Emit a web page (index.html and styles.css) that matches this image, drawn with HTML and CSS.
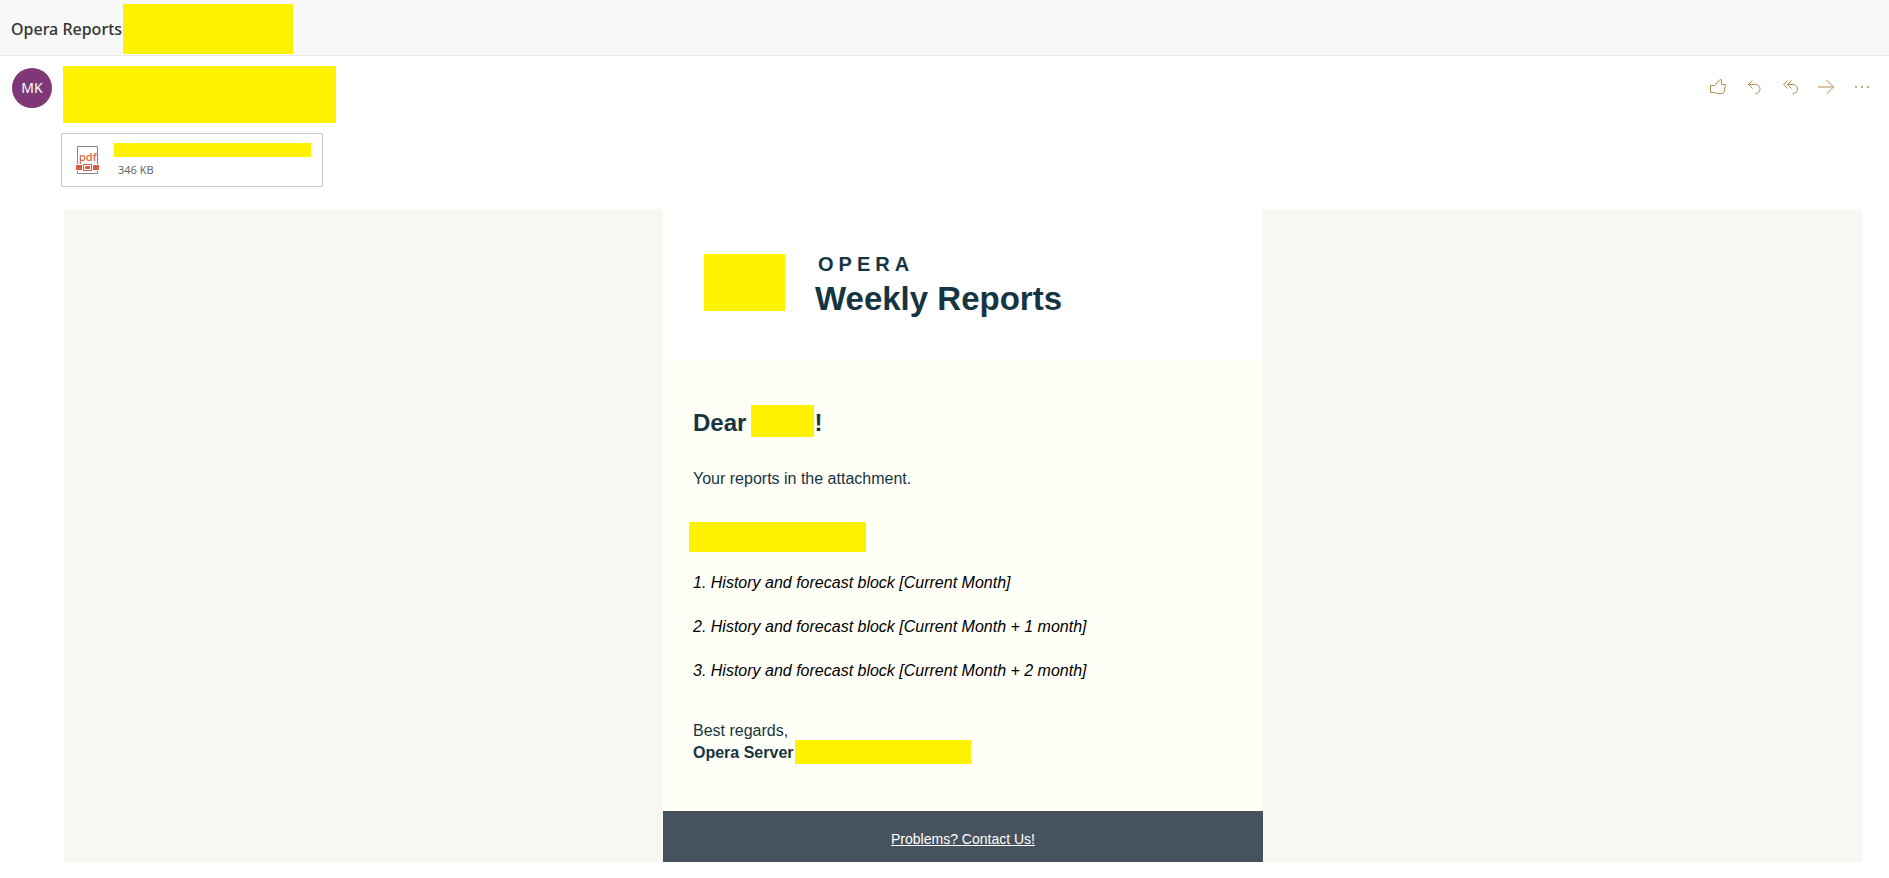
FILE: index.html
```html
<!DOCTYPE html>
<html lang="en">
<head>
  <meta charset="UTF-8" />
  <meta name="viewport" content="width=device-width, initial-scale=1" />
  <title>Opera Reports</title>
  <link rel="stylesheet" href="styles.css">
</head>
<body>
  <header class="subject-bar">
    <h1>Opera Reports</h1>
    <span class="mask mask-subject"></span>
  </header>

  <section class="sender">
    <div class="avatar">MK</div>
    <span class="mask mask-sender"></span>
    <div class="actions">
      <button type="button" aria-label="Like">
        <svg width="20" height="20" viewBox="0 0 20 20"><path d="M2.5 8.5H6.500L12 2.500L13.500 3V7.500H17.500L16 15.500L14.500 16.500H8.500L7 15.500H2.500Z"/></svg>
      </button>
      <button type="button" aria-label="Reply">
        <svg width="20" height="20" viewBox="0 0 20 20"><path d="M8.500 3.500L4.500 7.500L8.500 11.500M4.500 7.500H11.500A4.500 4.500 0 0 1 11.500 16.500H11"/></svg>
      </button>
      <button type="button" aria-label="Reply all">
        <svg width="20" height="20" viewBox="0 0 20 20"><path d="M7.500 3.500L3.500 7.500L7.500 11.500M11.500 3.500L7.500 7.500L11.500 11.500M7.500 7.500H13A4.500 4.500 0 0 1 13 16.500H12.500"/></svg>
      </button>
      <button type="button" aria-label="Forward">
        <svg width="20" height="20" viewBox="0 0 20 20"><path d="M2 10H17.500M10.500 3L17.500 10L10.500 17"/></svg>
      </button>
      <button type="button" aria-label="More actions">
        <svg class="dots" width="20" height="20" viewBox="0 0 20 20"><path d="M3 9h2v2h-2zM9 9h2v2h-2zM15 9h2v2h-2z"/></svg>
      </button>
    </div>
  </section>

  <a class="attachment" href="#">
    <svg width="24" height="28" viewBox="0 0 24 28">
      <path class="page" d="M1.500 18V0.500H21.500V18M1.500 25V27.500H21.500V25"/>
      <text x="3" y="15">pdf</text>
      <path class="band" d="M0 19H6V24H0ZM17 19H23V24H17Z"/>
      <rect class="buckle" x="7.500" y="18.500" width="8" height="6"/>
      <rect class="band" x="9" y="20" width="5" height="3"/>
    </svg>
    <span class="file">
      <span class="mask mask-file"></span>
      <span class="size">346 KB</span>
    </span>
  </a>

  <main class="message">
    <div class="letter">
      <div class="letter-head">
        <span class="mask mask-logo"></span>
        <div class="brand">
          <p>OPERA</p>
          <h2>Weekly Reports</h2>
        </div>
      </div>
      <div class="letter-body">
        <h3>Dear <span class="mask mask-name"></span>!</h3>
        <p>Your reports in the attachment.</p>
        <span class="mask mask-hotel"></span>
        <ol>
          <li>1. History and forecast block [Current Month]</li>
          <li>2. History and forecast block [Current Month + 1 month]</li>
          <li>3. History and forecast block [Current Month + 2 month]</li>
        </ol>
        <p class="regards">Best regards,</p>
        <div class="signature"><b>Opera Server</b><span class="mask mask-server"></span></div>
      </div>
      <footer><a href="#">Problems? Contact Us!</a></footer>
    </div>
  </main>
</body>
</html>
```
FILE: styles.css
```css
* {
  box-sizing: border-box;
}

body {
  margin: 0;
  background-color: #fff;
  color: #163542;
  font-family: "Noto Sans", sans-serif;
}

h1, h2, h3, p, ol {
  margin: 0;
  padding: 0;
}

.mask {
  display: block;
  background-color: #fff200;
}

.subject-bar {
  display: flex;
  align-items: center;
  height: 56px;
  padding: 2px 11px 0;
  background-color: #f8f8f8;
  border-bottom: 1px solid #eaeaea;
}

.subject-bar h1 {
  color: #333;
  font-size: 16px;
  font-weight: 500;
}

.mask-subject {
  width: 170px;
  height: 50px;
  margin-left: 1px;
}

.sender {
  display: flex;
  align-items: flex-start;
  padding: 10px 9px 10px 12px;
}

.avatar {
  width: 40px;
  height: 40px;
  margin: 2px 11px 0 0;
  border-radius: 50%;
  background-color: #7e3877;
  color: #fff;
  font-size: 14px;
  line-height: 40px;
  text-align: center;
}

.mask-sender {
  width: 273px;
  height: 57px;
}

.actions {
  display: flex;
  margin-left: auto;
}

.actions button {
  width: 36px;
  height: 42px;
  padding: 0;
  border: none;
  background: none;
  cursor: pointer;
}

.actions svg {
  display: block;
  margin: 0 auto;
  fill: none;
  stroke: #b98a58;
}

.actions .dots {
  fill: #c9ac8c;
  stroke: none;
}

.attachment {
  display: flex;
  width: 262px;
  height: 54px;
  margin-left: 61px;
  padding: 9px 11px 0 14px;
  border: 1px solid #c8c8c8;
  border-radius: 2px;
  text-decoration: none;
}

.attachment svg {
  flex: none;
  margin-top: 3px;
  fill: none;
}

.attachment text {
  fill: #dc6141;
  font-size: 11px;
  font-weight: 500;
}

.page {
  stroke: #858585;
}

.band {
  fill: #d65f3e;
}

.buckle {
  stroke: #d65f3e;
}

.file {
  flex: 1;
  margin-left: 14px;
}

.mask-file {
  height: 14px;
}

.size {
  display: block;
  margin: 5px 0 0 4px;
  color: #666;
  font-size: 11px;
  line-height: 16px;
}

.message {
  margin: 22px 27px 16px 64px;
  background-color: #f7f8f2;
  font-family: "Liberation Sans", Arial, sans-serif;
}

.letter {
  max-width: 600px;
  margin: 0 auto;
  background-color: #fffff7;
}

.letter-head {
  display: flex;
  align-items: flex-start;
  padding: 45px 41px 36px;
  background-color: #fff;
}

.mask-logo {
  width: 81px;
  height: 57px;
}

.brand {
  margin-left: 30px;
}

.brand p {
  padding-left: 3px;
  font-size: 20px;
  font-weight: bold;
  letter-spacing: 5px;
  line-height: 20px;
}

.brand h2 {
  font-size: 33px;
  line-height: 49px;
}

.letter-body {
  padding: 46px 30px 47px;
  font-size: 16px;
  line-height: 22px;
}

.letter-body h3 {
  display: flex;
  font-size: 24px;
  line-height: 36px;
}

.mask-name {
  width: 63px;
  height: 32px;
  margin-left: 5px;
}

.letter-body h3 + p {
  margin-top: 27px;
}

.mask-hotel {
  width: 177px;
  height: 30px;
  margin: 32px 0 20px -4px;
}

.letter-body ol {
  color: #000;
  font-style: italic;
  list-style: none;
}

.letter-body li {
  margin-bottom: 22px;
}

.regards {
  margin-top: 38px;
}

.signature {
  display: flex;
  align-items: flex-end;
  height: 24px;
  margin-top: -2px;
}

.mask-server {
  width: 176px;
  height: 24px;
  margin-left: 1px;
}

footer {
  padding: 20px 0 14px;
  background-color: #46525e;
  font-size: 14px;
  line-height: 17px;
  text-align: center;
}

footer a {
  color: #fff;
}
```
